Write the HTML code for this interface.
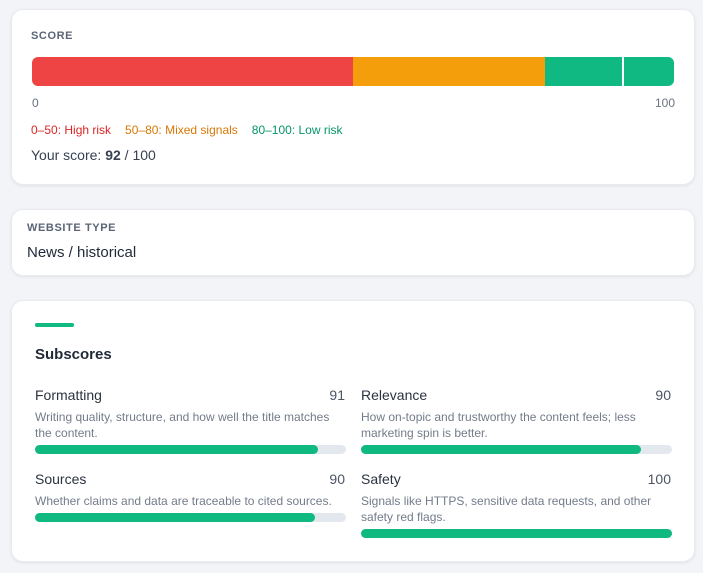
<!DOCTYPE html>
<html><head><style>
*{margin:0;padding:0;box-sizing:border-box}
body{width:703px;height:573px;background:#f2f4f7;font-family:"Liberation Sans",sans-serif;position:relative;overflow:hidden;color:#1f2937}
.card{position:absolute;left:11px;width:684px;background:#fff;border-radius:12px;box-shadow:0 1px 3px rgba(0,0,0,.08);border:1px solid #e8ecf1}
.abs{position:absolute;white-space:nowrap}
.lbl{font-size:11px;letter-spacing:.6px;color:#5b6575;font-weight:600}
.bar{position:absolute;height:9px;background:#e3e8ef;border-radius:5px;width:311px}
.bar div{height:100%;background:#10b97f;border-radius:5px}
.t{font-size:14px;color:#2b3340}
.n{font-size:14px;color:#4b5563;text-align:right;width:60px}
.d{font-size:12px;color:#737c8a;line-height:16px;white-space:normal;width:312px}
</style></head><body>
<div class="card" style="top:9px;height:176px"></div>
<div class="abs lbl" style="left:31px;top:30px">SCORE</div>
<div class="abs" style="left:32px;top:57px;width:642px;height:29px;border-radius:6px;overflow:hidden;display:flex">
<div style="width:321px;background:#ef4444"></div><div style="width:192px;background:#f59e0b"></div><div style="flex:1;background:#10b981"></div></div>
<div class="abs" style="left:622px;top:57px;width:2px;height:29px;background:#fff"></div>
<div class="abs" style="left:32px;top:96px;font-size:12px;color:#6b7280">0</div>
<div class="abs" style="left:655px;top:96px;font-size:12px;color:#6b7280">100</div>
<div class="abs" style="left:31px;top:123px;font-size:12px"><span style="color:#dc2626">0–50: High risk</span><span style="color:#d97706;margin-left:14px">50–80: Mixed signals</span><span style="color:#059669;margin-left:14px">80–100: Low risk</span></div>
<div class="abs" style="left:31px;top:147px;font-size:14px;color:#374151">Your score: <b>92</b> / 100</div>

<div class="card" style="top:209px;height:67px"></div>
<div class="abs lbl" style="left:27px;top:222px">WEBSITE TYPE</div>
<div class="abs" style="left:27px;top:244px;font-size:15px;color:#1f2937">News / historical</div>

<div class="card" style="top:300px;height:262px"></div>
<div class="abs" style="left:35px;top:323px;width:39px;height:4px;background:#10b981;border-radius:2px"></div>
<div class="abs" style="left:35px;top:346px;font-size:15px;font-weight:600;color:#1f2937">Subscores</div>

<div class="abs t" style="left:35px;top:387px">Formatting</div>
<div class="abs n" style="left:285px;top:387px">91</div>
<div class="abs d" style="left:35px;top:409px">Writing quality, structure, and how well the title matches the content.</div>
<div class="bar" style="left:35px;top:445px"><div style="width:283px"></div></div>

<div class="abs t" style="left:35px;top:471px">Sources</div>
<div class="abs n" style="left:285px;top:471px">90</div>
<div class="abs d" style="left:35px;top:493px">Whether claims and data are traceable to cited sources.</div>
<div class="bar" style="left:35px;top:513px"><div style="width:280px"></div></div>

<div class="abs t" style="left:361px;top:387px">Relevance</div>
<div class="abs n" style="left:611px;top:387px">90</div>
<div class="abs d" style="left:361px;top:409px">How on-topic and trustworthy the content feels; less marketing spin is better.</div>
<div class="bar" style="left:361px;top:445px"><div style="width:280px"></div></div>

<div class="abs t" style="left:361px;top:471px">Safety</div>
<div class="abs n" style="left:611px;top:471px">100</div>
<div class="abs d" style="left:361px;top:493px">Signals like HTTPS, sensitive data requests, and other safety red flags.</div>
<div class="bar" style="left:361px;top:529px"><div style="width:311px"></div></div>
</body></html>
